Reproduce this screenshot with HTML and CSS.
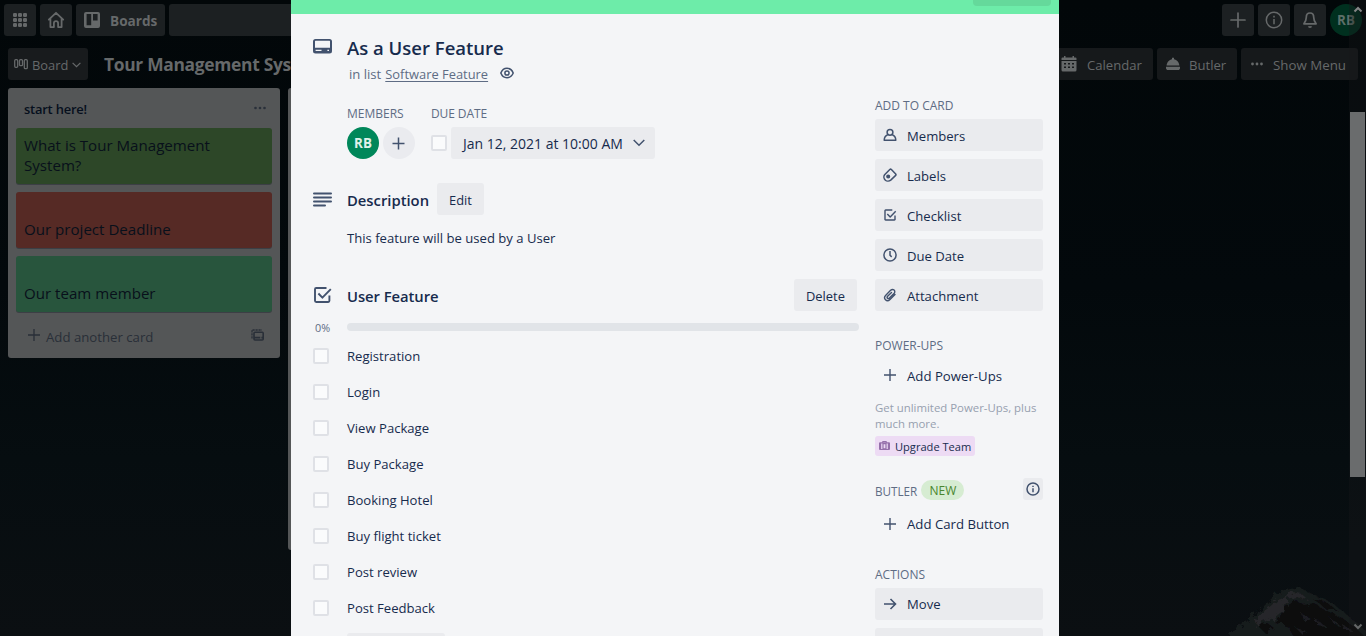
FILE: index.html
```html
<!DOCTYPE html>
<html lang="en">
<head>
<meta charset="utf-8">
<title>Tour Management System</title>
<link rel="stylesheet" href="styles.css">
</head>
<body>
<svg class="mountain" viewBox="0 0 170 70" aria-hidden="true">
  <defs>
    <filter id="rough" x="-5%" y="-5%" width="110%" height="110%">
      <feTurbulence type="fractalNoise" baseFrequency="0.16" numOctaves="3" seed="4" result="n"/>
      <feDisplacementMap in="SourceGraphic" in2="n" scale="9"/>
      <feGaussianBlur stdDeviation="0.7"/>
    </filter>
  </defs>
  <g filter="url(#rough)">
    <path d="M18 74l24-18 17-15 13-13 10-5 11-3 14 8 20 8 15 12 21 18 7 8z" fill="#191b1d"/>
    <path d="M54 50l20-16 10-4-4 14-10 8-20 8zM88 25l9 2 7 7-12-3-10 2z" fill="#252729"/>
    <path d="M80 42l12-8 8 5 10-2 12 8 16 7 16 12 10 10H92l-8-14-14-4 8-6zM54 60l10-2 6 4-8 6zM108 32l12 3 14 10-12-2z" fill="#0a0c0e"/>
    <path d="M98 48l8 4-6 3zM112 54l10 6-10-1zM124 50l12 9-6-1zM92 62l10 3-4 3zM138 58l10 6-8 0z" fill="#1d1f21"/>
  </g>
</svg>

<header class="topbar">
  <div class="nav-btn square"><svg width="16" height="16" viewBox="0 0 16 16" fill="currentColor"><rect x="1" y="1" width="4" height="4" rx="1.3"/><rect x="6" y="1" width="4" height="4" rx="1.3"/><rect x="11" y="1" width="4" height="4" rx="1.3"/><rect x="1" y="6" width="4" height="4" rx="1.3"/><rect x="6" y="6" width="4" height="4" rx="1.3"/><rect x="11" y="6" width="4" height="4" rx="1.3"/><rect x="1" y="11" width="4" height="4" rx="1.3"/><rect x="6" y="11" width="4" height="4" rx="1.3"/><rect x="11" y="11" width="4" height="4" rx="1.3"/></svg></div>
  <div class="nav-btn square"><svg width="18" height="18" viewBox="0 0 18 18" fill="none" stroke="currentColor" stroke-width="1.8" stroke-linejoin="round" stroke-linecap="round"><path d="M1.8 8.6L9 1.8l7.2 6.8M3.4 7.5v8.6h3.5v-3.9a2.1 2.1 0 0 1 4.2 0v3.9h3.5V7.5"/></svg></div>
  <div class="nav-btn boards"><svg width="16" height="16" viewBox="0 0 16 16"><path fill="currentColor" fill-rule="evenodd" d="M2 0h12a2 2 0 0 1 2 2v12a2 2 0 0 1-2 2H2a2 2 0 0 1-2-2V2a2 2 0 0 1 2-2zm.6 2v11.200h4.600V2zm6.400 0v6.600h4.600V2z"/></svg><span>Boards</span></div>
  <div class="nav-btn search"></div>
  <div class="topbar-right">
    <div class="nav-btn square"><svg width="16" height="16" viewBox="0 0 16 16" stroke="currentColor" stroke-width="1.7" stroke-linecap="round"><path d="M8 1v14M1 8h14"/></svg></div>
    <div class="nav-btn square"><svg width="18" height="18" viewBox="0 0 18 18" fill="none" stroke="currentColor" stroke-width="1.5"><circle cx="9" cy="9" r="7.7"/><path d="M9 8v5.2M9 4.8v1.7"/></svg></div>
    <div class="nav-btn square"><svg width="16" height="18" viewBox="0 0 16 18" fill="none" stroke="currentColor" stroke-width="1.7" stroke-linejoin="round"><path d="M8 2C5.2 2 4.3 4.2 4.3 6.2c0 3.4-.8 4.6-2.4 6.6h12.2c-1.600-2-2.400-3.200-2.400-6.600C11.700 4.200 10.800 2 8 2z"/><path d="M6.500 15.400c.5.900 2.500.9 3 0"/></svg></div>
    <div class="user">RB</div>
  </div>
</header>

<div class="boardbar">
  <div class="board-btn view"><svg width="14" height="11" viewBox="0 0 14 11" fill="none" stroke="currentColor" stroke-width="1.3"><rect x=".7" y=".7" width="3" height="7.600" rx="1"/><rect x="5.500" y=".7" width="3" height="6" rx="1"/><rect x="10.300" y=".7" width="3" height="9" rx="1"/></svg><span>Board</span><svg width="9" height="6" viewBox="0 0 9 6" fill="none" stroke="currentColor" stroke-width="1.200"><path d="M.6.8l3.900 3.900L8.400.8"/></svg></div>
  <div class="board-title">Tour Management System</div>
  <div class="boardbar-right">
    <div class="board-btn calendar"><svg width="16" height="16" viewBox="0 0 16 16"><path fill="currentColor" fill-rule="evenodd" d="M3 0h1.500v1.500h7V0H13v1.500h1.500a1 1 0 0 1 1 1V4H.5V2.500a1 1 0 0 1 1-1H3zM.5 5h15v9a1.500 1.500 0 0 1-1.500 1.500H2A1.500 1.500 0 0 1 .5 14zM3 7v1.500h2V7zm4 0v1.500h2V7zm4 0v1.500h2V7zm-8 3.500V12h2v-1.500zm4 0V12h2v-1.500zm4 0V12h2v-1.500z"/></svg><span>Calendar</span></div>
    <div class="board-btn butler"><svg width="14" height="14" viewBox="0 0 14 14" fill="currentColor"><path d="M.6 8.500C.9 5 3.400 2.600 6 2.200V.7h2v1.500c2.600.4 5.100 2.800 5.400 6.300zM0 9.800h14v1.700l-1 1.500H1l-1-1.500z"/></svg><span>Butler</span></div>
    <div class="board-btn menu"><svg width="12" height="4" viewBox="0 0 12 4" fill="currentColor"><circle cx="1.500" cy="2" r="1.400"/><circle cx="6" cy="2" r="1.400"/><circle cx="10.500" cy="2" r="1.400"/></svg><span>Show Menu</span></div>
  </div>
</div>

<main class="lists">
  <section class="list">
    <div class="list-head"><span>start here!</span><svg width="12" height="4" viewBox="0 0 12 4" fill="currentColor"><circle cx="1.500" cy="2" r="1.300"/><circle cx="6" cy="2" r="1.300"/><circle cx="10.500" cy="2" r="1.300"/></svg></div>
    <div class="cards">
      <article class="list-card lime">What is Tour Management System?</article>
      <article class="list-card red">Our project Deadline</article>
      <article class="list-card mint">Our team member</article>
    </div>
    <div class="list-foot"><svg width="12" height="12" viewBox="0 0 12 12" stroke="currentColor" stroke-width="1.300"><path d="M6 0v12M0 6h12"/></svg><span>Add another card</span><svg class="template" width="13" height="12" viewBox="0 0 13 12" fill="none" stroke="currentColor"><path d="M1 9.500V1h10" stroke-width="1.300" stroke-dasharray="2.200 .8"/><rect x="3" y="3.200" width="9.200" height="7.800" rx="1" stroke-width="1.600"/><path d="M3 8.700h6.300M10.400 8.700h1.600" stroke-width="1.800"/></svg></div>
  </section>
  <section class="list second"></section>
</main>

<div class="dialog">
  <div class="cover"><div class="cover-btn"></div></div>
  <div class="dialog-body">
    <div class="main-col">
      <div class="row title-row">
        <svg class="ico-title" width="19" height="15" viewBox="0 0 19 15"><path fill="currentColor" fill-rule="evenodd" d="M2.500 0h14A2.500 2.500 0 0 1 19 2.500v9.600a2.500 2.500 0 0 1-2.500 2.500h-14A2.500 2.500 0 0 1 0 12.100V2.500A2.500 2.500 0 0 1 2.500 0zM2 2.300v6.500h15V2.300a.5.5 0 0 0-.5-.5h-14a.5.5 0 0 0-.5.5zM2.600 10.700v1.400h5.900v-1.400zm11.800 0v1.400H16v-1.400z"/></svg>
        <div>
          <h1>As a User Feature</h1>
          <div class="in-list"><span>in list</span> <span class="link">Software Feature</span><svg width="14" height="12" viewBox="0 0 14 12" fill="none" stroke="currentColor"><path d="M.8 6C2 3 4.300 1.300 7 1.300S12 3 13.200 6C12 9 9.700 10.700 7 10.700S2 9 .8 6z" stroke-width="1.500"/><circle cx="7" cy="6" r="2.100" stroke-width="1.500"/></svg></div>
        </div>
      </div>
      <div class="details">
        <div>
          <h3>MEMBERS</h3>
          <div class="detail-line members"><div class="avatar">RB</div><div class="add-member"><svg width="13" height="13" viewBox="0 0 13 13" stroke="currentColor" stroke-width="1.500"><path d="M6.500.5v12M.5 6.500h12"/></svg></div></div>
        </div>
        <div>
          <h3 class="due">DUE DATE</h3>
          <div class="detail-line"><div class="check"></div><div class="button date"><span>Jan 12, 2021 at 10:00 AM</span><svg width="12" height="8" viewBox="0 0 12 8" fill="none" stroke="currentColor" stroke-width="1.500"><path d="M.7 1L6 6.300 11.300 1"/></svg></div></div>
        </div>
      </div>
      <div class="row head-row description">
        <svg width="19" height="15" viewBox="0 0 19 15" stroke="currentColor" stroke-width="2" stroke-linecap="round"><path d="M1 1.500h17M1 5.500h17M1 9.500h17M1 13.500h11"/></svg>
        <h2>Description</h2><div class="button edit"><span>Edit</span></div>
      </div>
      <p class="desc-text">This feature will be used by a User</p>
      <div class="row head-row checklist-head">
        <svg width="19" height="18" viewBox="0 0 19 18" fill="none" stroke="currentColor" stroke-width="1.900" stroke-linejoin="round"><path d="M13.500 2H3.200A1.200 1.200 0 0 0 2 3.200v11.600A1.200 1.200 0 0 0 3.200 16h12a1.200 1.200 0 0 0 1.200-1.200V9.500"/><path d="M5.400 7.500l4 4.200 8.400-8.600"/></svg>
        <h2 class="uf">User Feature</h2><div class="button delete"><span>Delete</span></div>
      </div>
      <div class="row progress"><span>0%</span><div class="bar"></div></div>
      <div class="items">
        <div class="row item"><div class="check"></div><span>Registration</span></div>
        <div class="row item"><div class="check"></div><span>Login</span></div>
        <div class="row item"><div class="check"></div><span>View Package</span></div>
        <div class="row item"><div class="check"></div><span>Buy Package</span></div>
        <div class="row item"><div class="check"></div><span>Booking Hotel</span></div>
        <div class="row item"><div class="check"></div><span>Buy flight ticket</span></div>
        <div class="row item"><div class="check"></div><span>Post review</span></div>
        <div class="row item"><div class="check"></div><span>Post Feedback</span></div>
      </div>
      <div class="button add-item"></div>
    </div>

    <aside class="side-col">
      <h3>ADD TO CARD</h3>
      <div class="stack">
        <div class="button side"><svg width="14" height="14" viewBox="0 0 14 14" fill="none" stroke="currentColor" stroke-width="1.500" stroke-linejoin="round"><circle cx="7" cy="4.300" r="2.900"/><path d="M4.700 6.800C2.500 7.600 1.300 9.400 1.200 12.300h11.600C12.700 9.400 11.500 7.600 9.300 6.800"/></svg><span>Members</span></div>
        <div class="button side"><svg width="14" height="14" viewBox="0 0 14 14" fill="none" stroke="currentColor" stroke-width="1.500" stroke-linejoin="round"><path d="M1.600 6.800L6.800 1.500a1.200 1.200 0 0 1 1.600 0l4.300 4.600a1 1 0 0 1 0 1.300l-5 4.700c-1.500 1.300-4 1.300-5.300.1-1.500-1.300-2-3.800-.8-5.400z"/><circle cx="5.200" cy="8.500" r="1.300" fill="currentColor"/></svg><span>Labels</span></div>
        <div class="button side"><svg width="14" height="14" viewBox="0 0 14 14" fill="none" stroke="currentColor" stroke-width="1.400" stroke-linejoin="round"><path d="M9.300 2H2.600a.6.6 0 0 0-.6.6v8.800a.6.6 0 0 0 .6.6h8.800a.6.6 0 0 0 .6-.6V7.500"/><path d="M4.300 6l2.900 3 5.500-5.800"/></svg><span>Checklist</span></div>
        <div class="button side"><svg width="14" height="14" viewBox="0 0 14 14" fill="none" stroke="currentColor" stroke-width="1.500"><circle cx="7" cy="7" r="6.100"/><path d="M7 3v4.200l1.700 1.700"/></svg><span>Due Date</span></div>
        <div class="button side"><svg width="14" height="14" viewBox="0 0 14 14" fill="none" stroke="currentColor" stroke-width="1.400" stroke-linecap="round"><path d="M12 6.400l-5 5c-1.300 1.300-3.300 1.500-4.500.3s-1-3.200.3-4.500L7.600 2.300c1-.9 2.500-1.100 3.500-.2s.9 2.500-.1 3.500L6.400 10.100c-.6.5-1.400.6-1.900.1s-.4-1.300.1-1.900l3.900-3.900"/></svg><span>Attachment</span></div>
      </div>
      <h3 class="gap-power">POWER-UPS</h3>
      <div class="button side plain"><svg width="14" height="14" viewBox="0 0 14 14" stroke="currentColor" stroke-width="1.400"><path d="M7 1v12M1 7h12"/></svg><span>Add Power-Ups</span></div>
      <p class="hint">Get unlimited Power-Ups, plus much more.</p>
      <div class="upgrade"><svg width="11" height="9" viewBox="0 0 11 9"><path fill="currentColor" fill-rule="evenodd" d="M3.200 1.300V.6a.6.6 0 0 1 .6-.6h3.400a.6.6 0 0 1 .6.6v.7H10a1 1 0 0 1 1 1V8a1 1 0 0 1-1 1H1a1 1 0 0 1-1-1V2.300a1 1 0 0 1 1-1zm1 0h2.600V1H4.200zM2.200 2.400V8h1.200V2.400zm5.400 0V8h1.200V2.400zM4.600 3.200v4h1.800v-4z"/></svg><span>Upgrade Team</span></div>
      <div class="butler-head"><h3>BUTLER</h3><span class="new">NEW</span><div class="info"><svg width="14" height="14" viewBox="0 0 14 14" fill="none" stroke="currentColor" stroke-width="1.500"><circle cx="7" cy="7" r="6"/><path d="M7 6.200v4M7 3.700v1.400"/></svg></div></div>
      <div class="button side plain card-button"><svg width="14" height="14" viewBox="0 0 14 14" stroke="currentColor" stroke-width="1.400"><path d="M7 1v12M1 7h12"/></svg><span>Add Card Button</span></div>
      <h3 class="gap-actions">ACTIONS</h3>
      <div class="stack actions">
        <div class="button side"><svg width="14" height="14" viewBox="0 0 14 14" fill="none" stroke="currentColor" stroke-width="1.600"><path d="M1 7h11M7.500 2l5 5-5 5"/></svg><span>Move</span></div>
        <div class="button side"></div>
      </div>
    </aside>
  </div>
</div>

<div class="scrollbar">
  <svg width="10" height="7" viewBox="0 0 10 7" fill="none" stroke="#858687" stroke-width="2"><path d="M1.500 5.500L5 2l3.500 3.500"/></svg>
  <div class="thumb"></div>
  <svg class="down" width="10" height="7" viewBox="0 0 10 7" fill="none" stroke="#656768" stroke-width="2"><path d="M1.500 1.500L5 5l3.500-3.500"/></svg>
</div>
</body>
</html>
```
FILE: styles.css
```css
* { box-sizing: border-box; }

html, body { height: 636px; overflow: hidden; }

body {
  margin: 0;
  position: relative;
  font: 13.1px/20px "Open Sans", "Noto Sans", sans-serif;
  color: #172b4d;
  background: linear-gradient(#020709 0, #03090c 45%, #060d10 72%, #0b0f12 100%);
}

h1, h2, h3, p { margin: 0; font-weight: 400; }
svg { display: block; flex: none; }

.mountain {
  position: absolute;
  left: 1204px;
  top: 566px;
  width: 170px;
  height: 70px;
}

/* Top bar */
.topbar {
  position: relative;
  display: flex;
  gap: 4px;
  height: 44px;
  padding: 4px;
}
.nav-btn {
  display: flex;
  align-items: center;
  justify-content: center;
  height: 32px;
  border-radius: 3px;
  background: #1c2022;
  color: #66696a;
}
.square { width: 32px; }
.boards {
  width: 89px;
  justify-content: flex-start;
  padding-left: 8px;
  gap: 10px;
  font-size: 13.6px;
  font-weight: 700;
}
.boards span { padding-top: 1px; }
.search { width: 180px; }
.topbar-right { display: flex; gap: 4px; margin-left: auto; }
.user {
  width: 32px;
  height: 32px;
  border-radius: 50%;
  background: #00301f;
  color: #5c6f68;
  font-size: 13.4px;
  font-weight: 700;
  line-height: 32px;
  text-align: center;
}

/* Board bar */
.boardbar {
  position: relative;
  display: flex;
  height: 44px;
  padding: 4px 8px 8px;
}
.board-btn {
  display: flex;
  align-items: center;
  height: 32px;
  border-radius: 3px;
  background: #16191b;
  color: #66696a;
}
.board-btn span { padding-top: 2px; }
.view { width: 80px; padding-left: 6px; background: #181b1d; }
.view span { margin: 0 4px 0 4px; font-size: 12.9px; }
.view svg:last-child { margin-top: 1px; }
.board-title {
  margin-left: 16px;
  font-size: 17.4px;
  font-weight: 700;
  line-height: 32px;
  letter-spacing: -0.3px;
  white-space: nowrap;
  color: #66696a;
}
.boardbar-right { display: flex; gap: 4px; margin-left: auto; }
.calendar { width: 100px; padding-left: 8px; gap: 10px; }
.butler { width: 80px; padding-left: 9px; gap: 9px; }
.menu { width: 117px; padding-left: 10px; gap: 10px; font-size: 13.3px; }

/* Lists */
.lists { position: relative; display: flex; align-items: flex-start; gap: 8px; padding-left: 8px; }
.list {
  width: 272px;
  height: 270px;
  padding: 0 8px;
  border-radius: 3px;
  background: #545657;
}
.second { height: 462px; }
.list-head {
  display: flex;
  align-items: center;
  justify-content: space-between;
  height: 40px;
  padding: 1px 6px 0 8px;
  color: #2a303a;
}
.list-head span { font-size: 12.9px; font-weight: 600; letter-spacing: -0.2px; color: #060f1d; }
.list-head svg { margin-top: -2px; }
.cards { display: flex; flex-direction: column; gap: 8px; }
.list-card {
  display: flex;
  align-items: flex-end;
  height: 56px;
  padding: 0 8px 9px;
  border-radius: 3px;
  box-shadow: 0 1px 0 #3c3f45;
  color: #08101b;
  font-size: 15.1px;
  line-height: 20px;
}
.lime { background: #2d4728; }
.red { background: #562a25; }
.mint { background: #28553d; }
.list-foot {
  display: flex;
  align-items: center;
  height: 46px;
  padding: 2px 8px 0 12px;
  color: #292f38;
}
.list-foot span { margin: 2px auto 0 6px; font-size: 13.2px; }
.list-foot svg { margin-top: -2px; }

/* Card dialog */
.dialog {
  position: absolute;
  left: 291px;
  top: 0;
  width: 768px;
  height: 636px;
  overflow: hidden;
  background: #f4f5f7;
}
.cover { height: 14px; background: #6deca9; }
.cover-btn {
  width: 78px;
  height: 6px;
  margin-left: 682px;
  border-radius: 0 0 4px 4px;
  background: #65d99b;
}
.dialog-body { display: flex; gap: 16px; padding: 22px 16px 0 22px; }
.main-col { width: 546px; }
.side-col { width: 168px; padding-top: 59px; }

.row { display: grid; grid-template-columns: 34px 1fr; }
.main-col svg { color: #42526e; }
h1 { font-size: 18.5px; font-weight: 600; line-height: 24px; }
h2 { padding-top: 2px; font-size: 14.8px; font-weight: 600; line-height: 30px; }
.uf { letter-spacing: -0.05px; }
h3 { padding-top: 2px; font-size: 12px; line-height: 18px; color: #5e6c84; white-space: nowrap; }
.due { letter-spacing: -0.1px; }

.ico-title { margin-top: 3px; }
.in-list { display: flex; margin: 4px 0 0 2px; color: #5e6c84; white-space: pre; }
.in-list svg { margin: 3px 0 0 12px; }
.link { margin-left: 4px; font-size: 12.9px; text-decoration: underline; text-underline-offset: 2px; }

.details { display: flex; gap: 16px; margin: 19px 0 0 34px; }
.detail-line { display: flex; align-items: center; gap: 4px; height: 32px; margin-top: 4px; }
.avatar, .add-member { width: 32px; height: 32px; border-radius: 50%; }
.avatar {
  background: #00875a;
  color: #dff1ea;
  font-size: 13.4px;
  font-weight: 700;
  line-height: 32px;
  text-align: center;
}
.add-member { display: flex; align-items: center; justify-content: center; padding-right: 1px; background: #eaebef; }
.members { width: 68px; }
.check {
  width: 16px;
  height: 16px;
  border: 2px solid #dfe1e6;
  border-radius: 2px;
  background: #fafbfc;
}
.button {
  display: flex;
  align-items: center;
  height: 32px;
  border-radius: 3px;
  background: #eaebee;
  white-space: nowrap;
}
.button span { padding-top: 2px; }
.date { width: 204px; padding-left: 12px; gap: 10px; }
.date span { font-size: 14px; }

.head-row { display: flex; align-items: center; height: 32px; }
.head-row svg { margin-right: 15px; }
.description { margin-top: 24px; }
.edit { width: 47px; margin-left: 8px; padding-left: 12px; font-size: 12.9px; }
.desc-text { margin: 13px 0 0 34px; }
.checklist-head { margin-top: 31px; }
.delete { width: 63px; margin: 0 2px 0 auto; padding-left: 12px; font-size: 12.9px; }
.progress { height: 8px; margin-top: 12px; grid-template-rows: 8px; align-items: center; }
.progress span { padding: 2px 0 0 2px; font-size: 10.8px; line-height: 10px; color: #5e6c84; }
.bar { height: 8px; border-radius: 4px; background: #e1e4e8; }
.items { margin-top: 7px; }
.item { height: 36px; align-items: center; }
.add-item { width: 98px; margin: 7px 0 0 34px; }

.side-col .button svg { color: #42526e; }
.stack { display: flex; flex-direction: column; gap: 8px; margin-top: 4px; }
.side { flex: none; width: 168px; padding-left: 8px; gap: 10px; }
.plain { background: none; }
.plain span { font-size: 13.2px; }
.card-button span, .actions span { padding-top: 0; }
.gap-power { margin-top: 24px; }
.gap-power + .plain { margin-top: 4px; }
.hint { margin-top: 9px; font-size: 11.4px; line-height: 16px; color: #97a0af; }
.upgrade {
  display: flex;
  align-items: center;
  gap: 5px;
  width: 100px;
  height: 20px;
  margin-top: 4px;
  padding-left: 4px;
  border-radius: 3px;
  background: #eddbf4;
  color: #9570aa;
  font-size: 11.1px;
  white-space: nowrap;
}
.upgrade svg { margin-top: -2px; }
.upgrade span { padding-top: 2px; color: #172b4d; }
.butler-head { display: flex; align-items: center; height: 22px; margin-top: 22px; }
.butler-head h3 { padding-top: 3px; font-size: 11.7px; }
.new {
  width: 43px;
  height: 20px;
  margin: 2px 0 0 4px;
  border-radius: 10px;
  background: #d6ecd2;
  color: #49852e;
  font-size: 12px;
  line-height: 21px;
  text-align: center;
}
.info {
  display: flex;
  align-items: center;
  justify-content: center;
  width: 20px;
  height: 22px;
  margin-left: auto;
  border-radius: 3px;
  background: #eaebee;
  color: #42526e;
}
.card-button { margin-top: 8px; }
.gap-actions { margin-top: 24px; }

/* Scrollbar */
.scrollbar {
  position: absolute;
  top: 0;
  right: 0;
  display: flex;
  flex-direction: column;
  align-items: center;
  width: 17px;
  height: 636px;
  padding: 6px 0 6px;
  background: rgba(24, 24, 26, 0.35);
}
.thumb { width: 15px; height: 365px; margin-top: 99px; background: #6a6c6d; }
.down { margin-top: auto; }
```
